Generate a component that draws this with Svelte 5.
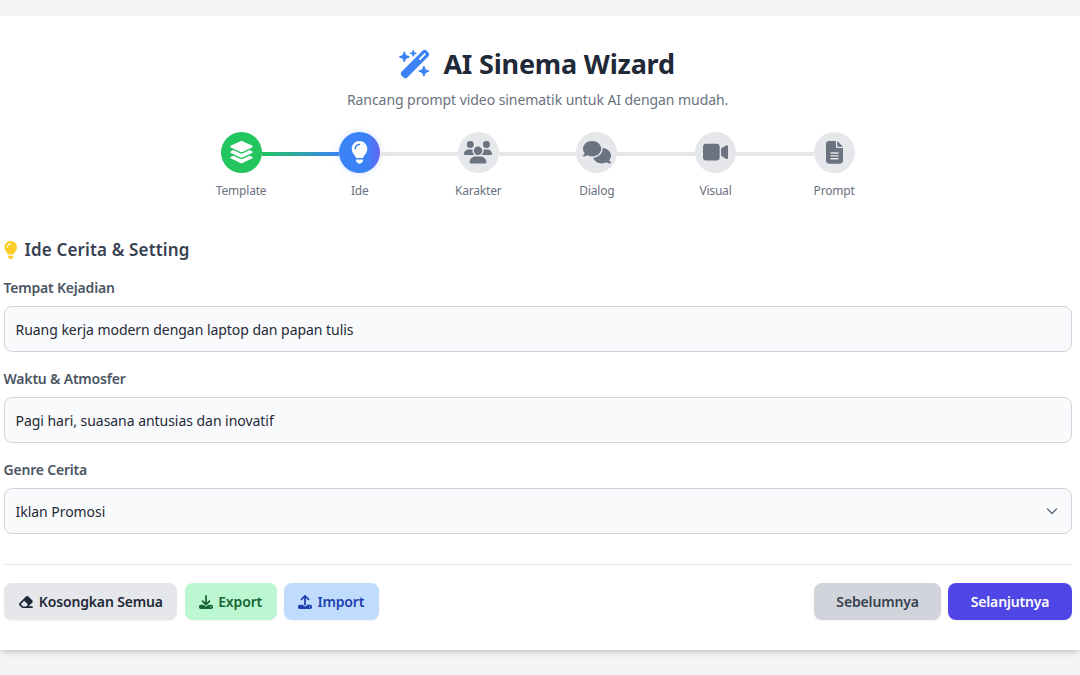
<script lang="ts">
  const steps = [
    { label: 'Template', box: '0 0 576 512', w: 25, cls: 'done', d: 'M264.5 5.2c14.9-6.9 32.1-6.9 47 0l218.6 101c8.5 3.9 13.9 12.4 13.9 21.8s-5.4 17.9-13.9 21.8l-218.6 101c-14.9 6.9-32.1 6.9-47 0L45.9 149.8C37.4 145.8 32 137.3 32 128s5.4-17.9 13.9-21.8L264.5 5.2zM476.9 209.6l53.2 24.6c8.5 3.9 13.9 12.4 13.9 21.8s-5.4 17.9-13.9 21.8l-218.6 101c-14.9 6.9-32.1 6.9-47 0L45.9 277.8C37.4 273.8 32 265.3 32 256s5.4-17.9 13.9-21.8l53.2-24.6 152 70.2c23.4 10.8 50.4 10.8 73.8 0l152-70.2zm-152 198.2l152-70.2 53.2 24.6c8.5 3.9 13.9 12.4 13.9 21.8s-5.4 17.9-13.9 21.8l-218.6 101c-14.9 6.9-32.1 6.9-47 0L45.9 405.8C37.4 401.8 32 393.3 32 384s5.4-17.9 13.9-21.8l53.2-24.6 152 70.2c23.4 10.8 50.4 10.8 73.8 0z' },
    { label: 'Ide', box: '0 0 384 512', w: 17, cls: 'active', d: 'M272 384c9.6-31.9 29.5-59.1 49.2-86.2l0 0c5.2-7.1 10.4-14.2 15.4-21.4c19.8-28.5 31.4-63 31.4-100.3C368 78.8 289.2 0 192 0S16 78.8 16 176c0 37.3 11.6 71.9 31.4 100.3c5 7.2 10.2 14.3 15.4 21.4l0 0c19.8 27.1 39.7 54.4 49.2 86.2H272zM192 512c44.2 0 80-35.8 80-80V416H112v16c0 44.2 35.8 80 80 80zM112 176c0 8.8-7.2 16-16 16s-16-7.2-16-16c0-61.9 50.1-112 112-112c8.8 0 16 7.2 16 16s-7.2 16-16 16c-44.2 0-80 35.8-80 80z' },
    { label: 'Karakter', box: '0 0 640 512', w: 28, cls: '', d: 'M144 0a80 80 0 1 1 0 160A80 80 0 1 1 144 0zM512 0a80 80 0 1 1 0 160A80 80 0 1 1 512 0zM0 298.7C0 239.8 47.8 192 106.7 192h42.7c15.9 0 31 3.5 44.6 9.7c-1.3 7.2-1.9 14.7-1.9 22.3c0 38.2 16.8 72.5 43.3 96c-.2 0-.4 0-.7 0H21.3C9.6 320 0 310.4 0 298.7zM405.3 320c-.2 0-.4 0-.7 0c26.6-23.5 43.3-57.8 43.3-96c0-7.6-.7-15-1.9-22.3c13.6-6.3 28.7-9.7 44.6-9.7h42.7C592.2 192 640 239.8 640 298.7c0 11.8-9.6 21.3-21.3 21.3H405.3zM224 224a96 96 0 1 1 192 0 96 96 0 1 1 -192 0zM128 485.3C128 411.7 187.7 352 261.3 352H378.7C452.3 352 512 411.7 512 485.3c0 14.7-11.9 26.7-26.7 26.7H154.7c-14.7 0-26.7-11.9-26.7-26.7z' },
    { label: 'Dialog', box: '0 0 640 512', w: 28, cls: '', d: 'M208 352c114.9 0 208-78.8 208-176S322.9 0 208 0S0 78.8 0 176c0 38.6 14.7 74.3 39.6 103.4c-3.5 9.4-8.7 17.7-14.2 24.7c-4.8 6.2-9.7 11-13.3 14.3c-1.8 1.6-3.3 2.9-4.3 3.7c-.5 .4-.9 .7-1.1 .8l-.2 .2 0 0 0 0C1 327.2-1.4 334.4 .8 340.9S9.1 352 16 352c21.8 0 43.8-5.6 62.1-12.5c9.2-3.5 17.8-7.4 25.3-11.4C134.1 343.3 169.8 352 208 352zM448 176c0 112.3-99.1 196.9-216.5 207C255.8 457.4 336.4 512 432 512c38.2 0 73.9-8.7 104.7-23.9c7.5 4 16 7.9 25.2 11.4c18.3 6.9 40.3 12.5 62.1 12.5c6.9 0 13.1-4.5 15.2-11.1c2.1-6.6-.2-13.8-5.8-17.9l0 0 0 0-.2-.2c-.2-.2-.6-.4-1.1-.8c-1-.8-2.5-2-4.3-3.7c-3.6-3.3-8.5-8.1-13.3-14.3c-5.5-7-10.7-15.4-14.2-24.7c24.9-29 39.6-64.7 39.6-103.4c0-92.8-84.9-168.9-192.6-175.5c.4 5.1 .6 10.3 .6 15.5z' },
    { label: 'Visual', box: '0 0 576 512', w: 25, cls: '', d: 'M0 128C0 92.7 28.7 64 64 64H320c35.3 0 64 28.7 64 64V384c0 35.3-28.7 64-64 64H64c-35.3 0-64-28.7-64-64V128zM559.1 99.8c10.4 5.6 16.9 16.4 16.9 28.2V384c0 11.8-6.5 22.6-16.9 28.2s-23 5-32.9-1.6l-96-64L416 337.1V320 192 174.9l14.2-9.5 96-64c9.8-6.5 22.4-7.2 32.9-1.6z' },
    { label: 'Prompt', box: '0 0 384 512', w: 17, cls: '', d: 'M64 0C28.7 0 0 28.7 0 64V448c0 35.3 28.7 64 64 64H320c35.3 0 64-28.7 64-64V160H256c-17.7 0-32-14.3-32-32V0H64zM256 0V128H384L256 0zM112 256H272c8.8 0 16 7.2 16 16s-7.2 16-16 16H112c-8.8 0-16-7.2-16-16s7.2-16 16-16zm0 64H272c8.8 0 16 7.2 16 16s-7.2 16-16 16H112c-8.8 0-16-7.2-16-16s7.2-16 16-16zm0 64H272c8.8 0 16 7.2 16 16s-7.2 16-16 16H112c-8.8 0-16-7.2-16-16s7.2-16 16-16z' }
  ];

  const bulb = steps[1];
  let tempat = $state('Ruang kerja modern dengan laptop dan papan tulis');
  let waktu = $state('Pagi hari, suasana antusias dan inovatif');
  let genre = $state('Iklan Promosi');
</script>

<div class="page">
  <main class="card">
    <header class="head">
      <h1>
        <svg class="wand" viewBox="0 0 576 512" aria-hidden="true"><path d="M234.7 42.7L197 56.8c-3 1.1-5 4-5 7.2s2 6.1 5 7.2l37.7 14.1L248.8 123c1.1 3 4 5 7.2 5s6.1-2 7.2-5l14.1-37.7L315 71.2c3-1.1 5-4 5-7.2s-2-6.1-5-7.2L277.3 42.7 263.2 5c-1.1-3-4-5-7.2-5s-6.1 2-7.2 5L234.7 42.7zM46.1 395.4c-18.7 18.7-18.7 49.1 0 67.9l34.6 34.6c18.7 18.7 49.1 18.7 67.9 0L529.9 116.5c18.7-18.7 18.7-49.1 0-67.9L495.3 14.1c-18.7-18.7-49.1-18.7-67.9 0L46.1 395.4zM484.6 82.6l-105 105-23.3-23.3 105-105 23.3 23.3zM7.5 117.2C3 118.9 0 123.2 0 128s3 9.1 7.5 10.8L64 160l21.2 56.5c1.7 4.5 6 7.5 10.8 7.5s9.1-3 10.8-7.5L128 160l56.5-21.2c4.5-1.7 7.5-6 7.5-10.8s-3-9.1-7.5-10.8L128 96 106.8 39.5C105.1 35 100.8 32 96 32s-9.1 3-10.8 7.5L64 96 7.5 117.2zm352 256c-4.5 1.7-7.5 6-7.5 10.8s3 9.1 7.5 10.8L416 416l21.2 56.5c1.7 4.5 6 7.5 10.8 7.5s9.1-3 10.8-7.5L480 416l56.5-21.2c4.5-1.7 7.5-6 7.5-10.8s-3-9.1-7.5-10.8L480 352l-21.2-56.5c-1.7-4.5-6-7.5-10.8-7.5s-9.1 3-10.8 7.5L416 352l-56.5 21.2z" /></svg>
        AI Sinema Wizard
      </h1>
      <p>Rancang prompt video sinematik untuk AI dengan mudah.</p>
    </header>

    <nav class="stepper">
      {#each steps as step, i}
        {#if i > 0}
          <span class="line" class:filled={i === 1}></span>
        {/if}
        <div class="step {step.cls}">
          <span class="dot">
            <svg viewBox={step.box} style:width="{step.w}px" aria-hidden="true"><path d={step.d} /></svg>
          </span>
          <span class="step-label">{step.label}</span>
        </div>
      {/each}
    </nav>

    <section class="form">
      <h2>
        <svg viewBox={bulb.box} aria-hidden="true"><path d={bulb.d} /></svg>
        Ide Cerita &amp; Setting
      </h2>

      <label class="field">
        <span>Tempat Kejadian</span>
        <input type="text" bind:value={tempat} />
      </label>
      <label class="field">
        <span>Waktu &amp; Atmosfer</span>
        <input type="text" bind:value={waktu} />
      </label>
      <label class="field">
        <span>Genre Cerita</span>
        <div class="select-wrap">
          <select bind:value={genre}>
            <option>Iklan Promosi</option>
            <option>Drama</option>
            <option>Komedi</option>
          </select>
          <svg class="chevron" viewBox="0 0 20 20" aria-hidden="true"><path d="M5.5 8l4.5 4.5L14.5 8" /></svg>
        </div>
      </label>
    </section>

    <footer class="actions">
      <div class="group">
        <button class="btn gray">
          <svg viewBox="0 0 576 512" aria-hidden="true"><path d="M290.7 57.4L57.4 290.7c-25 25-25 65.5 0 90.5l80 80c12 12 28.3 18.7 45.3 18.7H288h9.4H512c17.7 0 32-14.3 32-32s-14.3-32-32-32H387.9L518.6 285.3c25-25 25-65.5 0-90.5L381.3 57.4c-25-25-65.6-25-90.6 0zM297.4 416H288l-105.4 0-80-80L227.3 211.3 364.7 348.7 297.4 416z" /></svg>
          Kosongkan Semua
        </button>
        <button class="btn green">
          <svg viewBox="0 0 512 512" aria-hidden="true"><path d="M288 32c0-17.7-14.3-32-32-32s-32 14.3-32 32V274.7l-73.4-73.4c-12.5-12.5-32.8-12.5-45.3 0s-12.5 32.8 0 45.3l128 128c12.5 12.5 32.8 12.5 45.3 0l128-128c12.5-12.5 12.5-32.8 0-45.3s-32.8-12.5-45.3 0L288 274.7V32zM64 352c-35.3 0-64 28.7-64 64v32c0 35.3 28.7 64 64 64H448c35.3 0 64-28.7 64-64V416c0-35.3-28.7-64-64-64H346.5l-45.3 45.3c-25 25-65.5 25-90.5 0L165.5 352H64zm368 56a24 24 0 1 1 0 48 24 24 0 1 1 0-48z" /></svg>
          Export
        </button>
        <button class="btn blue">
          <svg viewBox="0 0 512 512" aria-hidden="true"><path d="M288 109.3V352c0 17.7-14.3 32-32 32s-32-14.3-32-32V109.3l-73.4 73.4c-12.5 12.5-32.8 12.5-45.3 0s-12.5-32.8 0-45.3l128-128c12.5-12.5 32.8-12.5 45.3 0l128 128c12.5 12.5 12.5 32.8 0 45.3s-32.8 12.5-45.3 0L288 109.3zM64 352H192c0 35.3 28.7 64 64 64s64-28.7 64-64H448c35.3 0 64 28.7 64 64v32c0 35.3-28.7 64-64 64H64c-35.3 0-64-28.7-64-64V416c0-35.3 28.7-64 64-64zM432 456a24 24 0 1 0 0-48 24 24 0 1 0 0 48z" /></svg>
          Import
        </button>
      </div>
      <div class="group">
        <button class="btn prev">Sebelumnya</button>
        <button class="btn next">Selanjutnya</button>
      </div>
    </footer>
  </main>
</div>

<style>
  :global(body) {
    background: #f3f4f6;
    font-family: 'Noto Sans', 'Open Sans', sans-serif;
  }

  .page {
    min-height: 675px;
    box-sizing: border-box;
    padding-top: 16px;
  }

  .card {
    height: 634px;
    box-sizing: border-box;
    padding: 30px 8.3px 0 3.5px;
    background: #fff;
    box-shadow: 0 4px 6px -1px rgba(0, 0, 0, 0.12), 0 2px 4px -2px rgba(0, 0, 0, 0.12);
  }

  .head {
    text-align: center;
  }

  h1 {
    margin: 0;
    padding-right: 1px;
    display: flex;
    justify-content: center;
    align-items: center;
    gap: 12px;
    font-size: 27px;
    line-height: 36px;
    font-weight: 700;
    letter-spacing: -0.2px;
    color: #1f2937;
  }

  .wand {
    width: 32px;
    height: 30px;
    fill: #3b82f6;
  }

  .head p {
    margin: 8px 0 0;
    font-size: 14px;
    line-height: 20px;
    letter-spacing: -0.06px;
    color: #6b7280;
  }

  .stepper {
    display: flex;
    justify-content: center;
    margin-top: 22px;
  }

  .step {
    width: 41px;
    display: flex;
    flex-direction: column;
    align-items: center;
  }

  .dot {
    flex: none;
    width: 41px;
    height: 41px;
    border-radius: 50%;
    background: #e5e7eb;
    display: flex;
    align-items: center;
    justify-content: center;
  }

  .dot svg {
    fill: #6b7280;
  }

  .done .dot {
    background: #22c55e;
  }

  .active .dot {
    background: linear-gradient(to right, #3b82f6 68%, #6366f1);
    box-shadow: 0 0 6px rgba(59, 130, 246, 0.25);
  }

  .done .dot svg,
  .active .dot svg {
    fill: #fff;
  }

  .step-label {
    margin-top: 9px;
    font-size: 12px;
    line-height: 18px;
    letter-spacing: -0.2px;
    white-space: nowrap;
    color: #6b7280;
  }

  .line {
    flex: none;
    width: 77.6px;
    height: 4px;
    margin-top: 20px;
    background: #e5e7eb;
  }

  .line.filled {
    background: linear-gradient(to right, #22c55e, #3b82f6);
  }

  .form {
    margin-top: 36px;
  }

  h2 {
    margin: 0;
    display: flex;
    align-items: center;
    gap: 7.5px;
    font-size: 17px;
    line-height: 28px;
    font-weight: 600;
    letter-spacing: 0.15px;
    color: #374151;
  }

  h2 svg {
    width: 13.5px;
    height: 18px;
    fill: #fbcc24;
  }

  .field {
    display: block;
    margin-top: 14px;
  }

  .field + .field {
    margin-top: 17px;
  }

  .field > span {
    display: block;
    margin-bottom: 8px;
    font-size: 14px;
    line-height: 20px;
    font-weight: 600;
    letter-spacing: -0.2px;
    color: #4b5563;
  }

  input,
  select {
    display: block;
    width: 100%;
    height: 46px;
    box-sizing: border-box;
    padding: 0 11px;
    border: 1px solid #d1d5db;
    border-radius: 8px;
    background: #f9fafb;
    font: inherit;
    font-size: 14px;
    letter-spacing: -0.04px;
    color: #1f2937;
    appearance: none;
    outline: none;
  }

  .select-wrap {
    position: relative;
  }

  .chevron {
    position: absolute;
    right: 10px;
    top: 12.5px;
    width: 20px;
    height: 20px;
    fill: none;
    stroke: #6b7280;
    stroke-width: 1.5;
    stroke-linecap: round;
    stroke-linejoin: round;
    pointer-events: none;
  }

  .actions {
    display: flex;
    justify-content: space-between;
    margin-top: 30px;
    padding-top: 18px;
    border-top: 1px solid #e5e7eb;
  }

  .group {
    display: flex;
    gap: 7.3px;
  }

  .btn {
    display: flex;
    align-items: center;
    gap: 5px;
    height: 37px;
    padding: 0 14.5px;
    border: none;
    border-radius: 8px;
    font: inherit;
    font-size: 14px;
    font-weight: 600;
    letter-spacing: -0.15px;
    box-shadow: 0 1px 2px rgba(0, 0, 0, 0.05);
  }

  .btn svg {
    height: 14px;
    fill: currentColor;
  }

  .gray {
    background: #e5e7eb;
    color: #1f2937;
  }

  .green {
    background: #bbf7d0;
    color: #166534;
  }

  .blue {
    background: #bfdbfe;
    color: #1e40af;
  }

  .prev {
    background: #d1d5db;
    color: #374151;
    padding: 0 22.3px;
  }

  .next {
    background: #4f46e5;
    color: #fff;
    padding: 0 22.3px;
  }
</style>
